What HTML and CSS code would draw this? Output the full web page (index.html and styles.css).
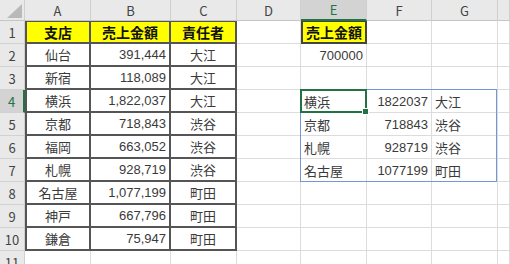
FILE: index.html
```html
<!DOCTYPE html>
<html lang="ja">
<head>
<meta charset="utf-8">
<link rel="stylesheet" href="styles.css">
</head>
<body>
<div class="sheet">
  <div class="row hdr">
    <div class="corner"><span class="tri"></span></div>
    <div class="ch">A</div><div class="ch">B</div><div class="ch">C</div><div class="ch">D</div>
    <div class="ch selc">E</div><div class="ch">F</div><div class="ch">G</div><div class="ch"></div>
  </div>
  <div class="row">
    <div class="rh">1</div>
    <div class="t l top y ctr">支店</div><div class="t top y ctr">売上金額</div><div class="t top y ctr">責任者</div>
    <div></div><div class="box y ctr">売上金額</div><div></div><div></div><div></div>
  </div>
  <div class="row">
    <div class="rh">2</div>
    <div class="t l ctr">仙台</div><div class="t num">391,444</div><div class="t ctr">大江</div>
    <div></div><div class="num">700000</div><div></div><div></div><div></div>
  </div>
  <div class="row">
    <div class="rh">3</div>
    <div class="t l ctr">新宿</div><div class="t num">118,089</div><div class="t ctr">大江</div>
    <div></div><div></div><div></div><div></div><div></div>
  </div>
  <div class="row">
    <div class="rh selr">4</div>
    <div class="t l ctr">横浜</div><div class="t num">1,822,037</div><div class="t ctr">大江</div>
    <div></div>
    <div class="active">横浜<span class="range"></span><span class="cursor"><span class="handle"></span></span></div>
    <div class="num">1822037</div><div>大江</div><div></div>
  </div>
  <div class="row">
    <div class="rh">5</div>
    <div class="t l ctr">京都</div><div class="t num">718,843</div><div class="t ctr">渋谷</div>
    <div></div><div>京都</div><div class="num">718843</div><div>渋谷</div><div></div>
  </div>
  <div class="row">
    <div class="rh">6</div>
    <div class="t l ctr">福岡</div><div class="t num">663,052</div><div class="t ctr">渋谷</div>
    <div></div><div>札幌</div><div class="num">928719</div><div>渋谷</div><div></div>
  </div>
  <div class="row">
    <div class="rh">7</div>
    <div class="t l ctr">札幌</div><div class="t num">928,719</div><div class="t ctr">渋谷</div>
    <div></div><div>名古屋</div><div class="num">1077199</div><div>町田</div><div></div>
  </div>
  <div class="row">
    <div class="rh">8</div>
    <div class="t l ctr">名古屋</div><div class="t num">1,077,199</div><div class="t ctr">町田</div>
    <div></div><div></div><div></div><div></div><div></div>
  </div>
  <div class="row">
    <div class="rh">9</div>
    <div class="t l ctr">神戸</div><div class="t num">667,796</div><div class="t ctr">町田</div>
    <div></div><div></div><div></div><div></div><div></div>
  </div>
  <div class="row">
    <div class="rh">10</div>
    <div class="t l ctr">鎌倉</div><div class="t num">75,947</div><div class="t ctr">町田</div>
    <div></div><div></div><div></div><div></div><div></div>
  </div>
  <div class="row">
    <div class="rh">11</div>
    <div></div><div></div><div></div><div></div><div></div><div></div><div></div><div></div>
  </div>
</div>
</body>
</html>
```
FILE: styles.css
```css
html, body {
  margin: 0;
  padding: 0;
  background: #ffffff;
}
.sheet {
  width: 510px;
  height: 264px;
  overflow: hidden;
  font-family: "Noto Sans CJK JP", sans-serif;
  font-size: 13px;
  color: #3a3a3a;
}
.row {
  display: grid;
  grid-template-columns: 25px 66px 80px 66px 64px 66px 65px 66px 1fr;
  height: 23px;
}
.row.hdr {
  height: 21px;
}
.row > div {
  box-sizing: border-box;
  border-right: 1px solid #dcdcdc;
  border-bottom: 1px solid #dcdcdc;
  display: flex;
  align-items: center;
  padding: 0 3px;
  white-space: nowrap;
  line-height: 1;
}
.hdr > div {
  background: #e9e9e9;
  border-right-color: #cfcfcf;
  border-bottom-color: #c6c6c6;
  justify-content: center;
  color: #444444;
}
.corner {
  justify-content: flex-end !important;
  align-items: flex-end !important;
  padding: 0 2px 2px 0 !important;
}
.tri {
  width: 15px;
  height: 14px;
  background: #b9b9b9;
  clip-path: polygon(100% 0, 100% 100%, 0 100%);
}
.ch.selc {
  background: #d3d3d3;
  color: #217346;
  border-bottom: 2px solid #217346;
}
.row > .rh {
  background: #e9e9e9;
  border-right-color: #cfcfcf;
  border-bottom-color: #d2d2d2;
  justify-content: center;
  color: #444444;
  padding: 0;
}
.row > .rh.selr {
  background: #d3d3d3;
  color: #217346;
  border-right: 2px solid #217346;
}
.row > .t {
  border-right: 2px solid #555555;
  border-bottom: 2px solid #555555;
}
.row > .t.l {
  border-left: 2px solid #555555;
}
.row > .t.top {
  border-top: 1px solid #555555;
}
.row > .box {
  border: 2px solid #444444;
  border-top-width: 1px;
}
.y {
  background: #ffff00;
  font-weight: bold;
  font-size: 14px;
  color: #111111;
}
.ctr {
  justify-content: center;
}
.num {
  justify-content: flex-end;
  font-family: "Liberation Sans", "Noto Sans CJK JP", sans-serif;
}
.active {
  position: relative;
}
.range {
  position: absolute;
  left: -1px;
  top: -1px;
  width: 197px;
  height: 93px;
  box-sizing: border-box;
  border: 1px solid #7396d8;
  pointer-events: none;
}
.cursor {
  position: absolute;
  left: -1px;
  top: -1px;
  width: 67px;
  height: 24px;
  box-sizing: border-box;
  border: 2px solid #217346;
  pointer-events: none;
}
.handle {
  position: absolute;
  right: -4px;
  bottom: -4px;
  width: 5px;
  height: 5px;
  background: #217346;
  border: 1px solid #ffffff;
}
```
